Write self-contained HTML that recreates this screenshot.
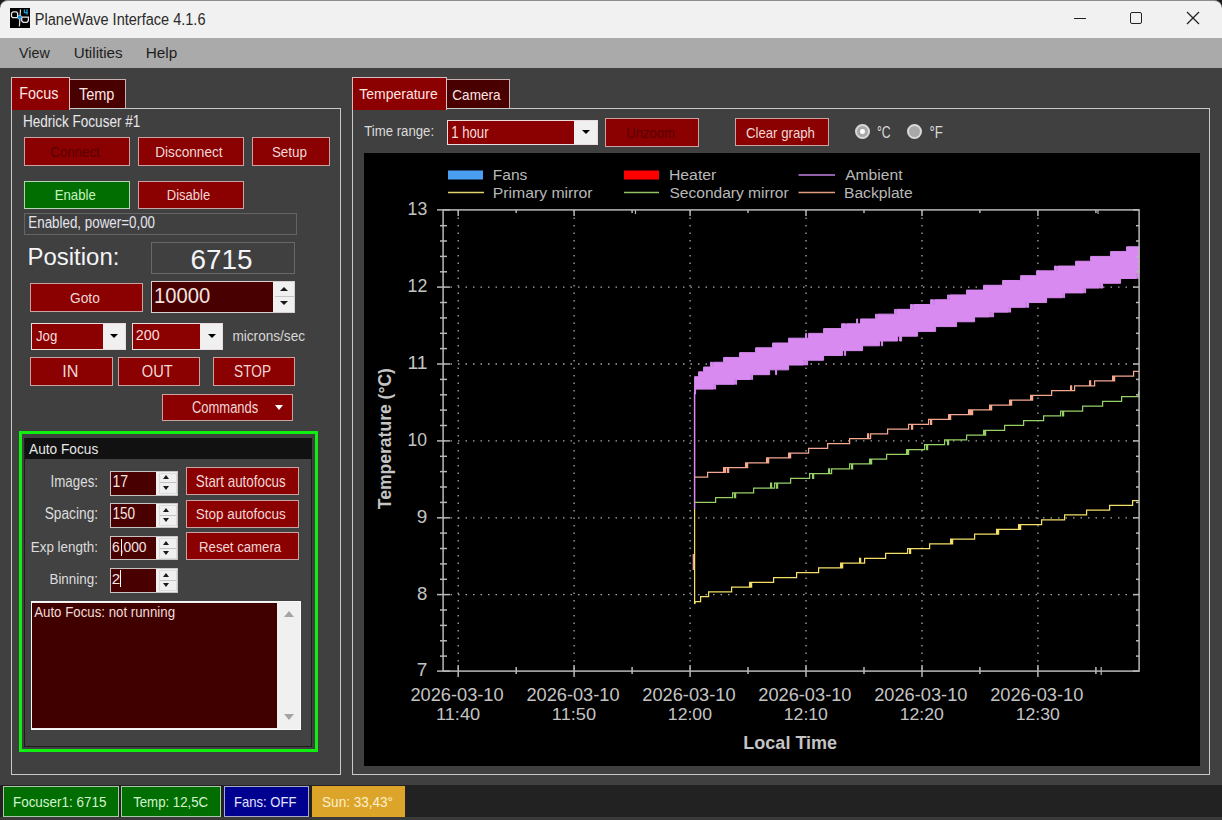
<!DOCTYPE html>
<html><head><meta charset="utf-8">
<style>
*{box-sizing:border-box;margin:0;padding:0}
html,body{width:1222px;height:820px;overflow:hidden;background:#404040;font-family:"Liberation Sans",sans-serif}
.a{position:absolute}
.btn{position:absolute;background:#8b0000;border:1px solid #c9a3a3}
.num{position:absolute;background:#480000;border:1.3px solid #c8c4c4}
.spin{position:absolute;top:0;right:0;bottom:0;background:#f0f0f0}
.combo{position:absolute;background:#8b0000;border:1.5px solid #e8dcdc}
.combo .dd{position:absolute;top:0;right:0;bottom:0;background:#f0f0f0}
.tri{position:absolute;width:0;height:0;border-left:4px solid transparent;border-right:4px solid transparent;border-top:4px solid #000}
.trid{position:absolute;width:0;height:0;border-left:3.6px solid transparent;border-right:3.6px solid transparent;border-top:4.2px solid #1a1a1a}
.triu{position:absolute;width:0;height:0;border-left:3.6px solid transparent;border-right:3.6px solid transparent;border-bottom:4.2px solid #1a1a1a}
</style></head><body>
<!-- title bar -->
<div class="a" style="left:0;top:0;width:1222px;height:20px;background:#1c1c1c"></div>
<div class="a" style="left:0;top:0;width:1222px;height:38px;background:#f2f1f1;border-radius:8px 8px 0 0;border-top:1px solid #8c8c8c"></div>
<svg class="a" style="left:10px;top:8px" width="20" height="20" viewBox="0 0 20 20">
<rect x="0" y="0" width="20" height="20" fill="#000"/>
<path d="M3,3.8 H6.3 L7.6,5.1 V9.7 H2.8 L1.5,8.4 V5.3 Z" fill="none" stroke="#e4e4e4" stroke-width="1.3"/>
<path d="M11.7,9.1 H18.4 V12.8 L16.9,14.3 H13.2 L11.7,12.8 Z" fill="none" stroke="#e4e4e4" stroke-width="1.3"/>
<path d="M10.5,1.5 L9.4,18.4" stroke="#e4e4e4" stroke-width="1.2"/>
<circle cx="9.6" cy="9.2" r="2.3" fill="#a0dcff"/>
<circle cx="9.6" cy="9.2" r="1.7" fill="#1c8ad0"/>
<path d="M14.4,1.6 V4.7 H17.9 M17,1.3 V6.8" fill="none" stroke="#20a0d8" stroke-width="1.3"/>
</svg>
<!-- window controls -->
<div class="a" style="left:1074px;top:18px;width:12px;height:1.3px;background:#222"></div>
<div class="a" style="left:1130px;top:11.5px;width:12px;height:12px;border:1.3px solid #222;border-radius:2px"></div>
<svg class="a" style="left:1186px;top:11px" width="14" height="14"><path d="M1,1 L13,13 M13,1 L1,13" stroke="#222" stroke-width="1.3"/></svg>
<!-- menu -->
<div class="a" style="left:0;top:38px;width:1222px;height:30px;background:#aaaaaa"></div>

<!-- LEFT PANEL -->
<div class="a" style="left:11px;top:107.8px;width:330px;height:667.5px;border:1.6px solid #c8c8c8"></div>
<div class="a" style="left:11px;top:77px;width:58.7px;height:32.5px;background:#8b0000;border:1.4px solid #d4c0c0;border-bottom:none"></div>
<div class="a" style="left:69.7px;top:79.3px;width:56px;height:28.7px;background:#480000;border:1.3px solid #c8b0b0;border-bottom:none;border-left:none"></div>

<div class="btn" style="left:24px;top:137px;width:106px;height:28.5px"></div>
<div class="btn" style="left:137.5px;top:137px;width:106.5px;height:28.5px"></div>
<div class="btn" style="left:251.5px;top:137px;width:78.5px;height:28.5px"></div>
<div class="btn" style="left:24px;top:181px;width:106px;height:28px;background:#006e00;border-color:#b4d4b4"></div>
<div class="btn" style="left:137.5px;top:181px;width:106.5px;height:28px"></div>
<div class="a" style="left:24px;top:213px;width:273px;height:22px;border:1px solid #646464"></div>

<div class="a" style="left:151px;top:242px;width:144px;height:32px;border:1px solid #686868"></div>

<div class="btn" style="left:30px;top:283px;width:112.5px;height:28.5px"></div>
<div class="num" style="left:151px;top:280.5px;width:144px;height:32.5px;border-color:#d8d0d0">
  <div class="spin" style="width:21px"></div>
</div>
<div class="a" style="left:279.5px;top:287.3px;width:0;height:0;border-left:4.4px solid transparent;border-right:4.4px solid transparent;border-bottom:4.8px solid #1a1a1a"></div>
<div class="a" style="left:279.5px;top:301.4px;width:0;height:0;border-left:4.4px solid transparent;border-right:4.4px solid transparent;border-top:4.8px solid #1a1a1a"></div>
<div class="a" style="left:275px;top:296px;width:19px;height:1px;background:#c8c8c8"></div>

<div class="combo" style="left:31px;top:323px;width:94.5px;height:26.5px"><div class="dd" style="width:22px"></div></div>
<div class="tri" style="left:110px;top:333.5px"></div>
<div class="combo" style="left:132.3px;top:323px;width:90.5px;height:26.5px"><div class="dd" style="width:22px"></div></div>
<div class="tri" style="left:207.5px;top:333.5px"></div>

<div class="btn" style="left:30px;top:357px;width:83px;height:28.5px"></div>
<div class="btn" style="left:117.7px;top:357px;width:82.5px;height:28.5px"></div>
<div class="btn" style="left:212.9px;top:357px;width:82.3px;height:28.5px"></div>
<div class="btn" style="left:161.6px;top:393.6px;width:131.2px;height:27.5px"></div>
<div class="a" style="left:275.3px;top:405.2px;width:0;height:0;border-left:4.7px solid transparent;border-right:4.7px solid transparent;border-top:5.6px solid #fff"></div>

<!-- Auto focus group -->
<div class="a" style="left:18.5px;top:430.5px;width:299.5px;height:321px;border:3px solid #10f010"></div>
<div class="a" style="left:24px;top:437.5px;width:288px;height:309px;border:1.5px solid #1c1c1c;background:#424242"></div>
<div class="a" style="left:24.5px;top:438px;width:287px;height:21px;background:#111111"></div>

<div class="num" style="left:110.2px;top:470.5px;width:68px;height:25px"><div class="spin" style="width:21px"></div></div>
<div class="btn" style="left:186.4px;top:467.4px;width:112.3px;height:27.7px"></div>
<div class="num" style="left:110.2px;top:503.2px;width:68px;height:24.5px"><div class="spin" style="width:21px"></div></div>
<div class="btn" style="left:186.4px;top:500px;width:112.3px;height:27.7px"></div>
<div class="num" style="left:110.2px;top:535.9px;width:68px;height:24.5px"><div class="spin" style="width:21px"></div></div>
<div class="btn" style="left:186.4px;top:532.4px;width:112.3px;height:27.7px"></div>
<div class="num" style="left:110.2px;top:568.2px;width:68px;height:24.5px"><div class="spin" style="width:21px"></div></div>
<div class="triu" style="left:163.3px;top:475.1px"></div><div class="trid" style="left:163.3px;top:485.5px"></div><div class="a" style="left:159px;top:482.1px;width:17px;height:1px;background:#c4c4c4"></div><div class="a" style="left:158.5px;top:472.5px;width:18px;height:21.0px;border:1px solid #dcdcdc"></div>
<div class="triu" style="left:163.3px;top:507.8px"></div><div class="trid" style="left:163.3px;top:518.2px"></div><div class="a" style="left:159px;top:514.8px;width:17px;height:1px;background:#c4c4c4"></div><div class="a" style="left:158.5px;top:505.2px;width:18px;height:21.0px;border:1px solid #dcdcdc"></div>
<div class="triu" style="left:163.3px;top:540.5px"></div><div class="trid" style="left:163.3px;top:550.9px"></div><div class="a" style="left:159px;top:547.5px;width:17px;height:1px;background:#c4c4c4"></div><div class="a" style="left:158.5px;top:537.9px;width:18px;height:21.0px;border:1px solid #dcdcdc"></div>
<div class="triu" style="left:163.3px;top:572.8px"></div><div class="trid" style="left:163.3px;top:583.2px"></div><div class="a" style="left:159px;top:579.8px;width:17px;height:1px;background:#c4c4c4"></div><div class="a" style="left:158.5px;top:570.2px;width:18px;height:21.0px;border:1px solid #dcdcdc"></div>
<div class="a" style="left:120.3px;top:570px;width:1.2px;height:17px;background:#fff"></div>
<div class="a" style="left:120.6px;top:538.5px;width:1.1px;height:17px;background:#fff"></div>

<div class="a" style="left:30.5px;top:601px;width:270.5px;height:128.5px;background:#f0f0f0;border:1.5px solid #f8f8f8"></div>
<div class="a" style="left:32px;top:602.5px;width:245px;height:125.2px;background:#400000"></div>
<div class="a" style="left:283.6px;top:610.8px;width:0;height:0;border-left:5.2px solid transparent;border-right:5.2px solid transparent;border-bottom:6.4px solid #a4a4a4"></div>
<div class="a" style="left:283.6px;top:714.3px;width:0;height:0;border-left:5.2px solid transparent;border-right:5.2px solid transparent;border-top:6.4px solid #a4a4a4"></div>

<!-- RIGHT PANEL -->
<div class="a" style="left:352px;top:107.8px;width:858px;height:667px;border:1.6px solid #c8c8c8"></div>
<div class="a" style="left:352px;top:77px;width:94.8px;height:32.5px;background:#8b0000;border:1.4px solid #d4c0c0;border-bottom:none"></div>
<div class="a" style="left:446.8px;top:79.3px;width:63.5px;height:28.7px;background:#480000;border:1.3px solid #c8b0b0;border-bottom:none;border-left:none"></div>

<div class="combo" style="left:446.5px;top:119.5px;width:151px;height:25.5px"><div class="dd" style="width:22.5px"></div></div>
<div class="tri" style="left:582px;top:130px"></div>
<div class="btn" style="left:605.3px;top:118.2px;width:93.4px;height:28.5px"></div>
<div class="btn" style="left:735.4px;top:118.2px;width:93.2px;height:28px"></div>
<div class="a" style="left:854.8px;top:124px;width:15.2px;height:15.2px;border-radius:50%;background:#a8a8a8;border:2px solid #d8d8d8"></div>
<div class="a" style="left:860.1px;top:129.3px;width:4.6px;height:4.6px;border-radius:50%;background:#fff"></div>
<div class="a" style="left:907.3px;top:124px;width:15.2px;height:15.2px;border-radius:50%;background:#a8a8a8;border:2px solid #d8d8d8"></div>

<div class="a" style="left:364px;top:153px;width:836px;height:613px;background:#000"></div>
<svg width="1222" height="820" style="position:absolute;left:0;top:0">
<g stroke="#a8a8a8" stroke-width="1.3" stroke-dasharray="1.5 6" fill="none"><line x1="443" y1="594.6" x2="1139" y2="594.6"/><line x1="443" y1="517.8" x2="1139" y2="517.8"/><line x1="443" y1="440.9" x2="1139" y2="440.9"/><line x1="443" y1="364.0" x2="1139" y2="364.0"/><line x1="443" y1="287.1" x2="1139" y2="287.1"/><line x1="458.2" y1="210" x2="458.2" y2="671"/><line x1="574.1" y1="210" x2="574.1" y2="671"/><line x1="690.1" y1="210" x2="690.1" y2="671"/><line x1="806.0" y1="210" x2="806.0" y2="671"/><line x1="922.0" y1="210" x2="922.0" y2="671"/><line x1="1037.9" y1="210" x2="1037.9" y2="671"/></g>
<path d="M694.6,393.92V376.68H698.6V371.87H703.6V367.06H710.6V362.25H712.6V367.06H713.6V362.25H723.6V357.44H739.6V352.63H755.6V347.82H772.6V343.01H788.6V338.20H805.6V333.39H806.6V338.20H808.6V333.39H823.6V328.58H841.6V323.77H845.6V328.58H846.6V323.77H856.6V318.96H857.6V323.77H860.6V318.96H875.6V314.15H876.6V318.96H877.6V314.15H894.6V309.34H895.6V314.15H896.6V309.34H910.6V304.53H912.6V309.34H913.6V304.53H930.6V299.72H933.6V304.53H934.6V299.72H947.6V294.91H948.6V299.72H949.6V294.91H966.6V290.10H983.6V285.29H1002.6V280.48H1020.6V275.67H1036.6V270.86H1054.6V266.05H1056.6V270.86H1057.6V266.05H1075.6V261.24H1090.6V256.43H1110.6V251.62H1126.6V246.81H1139V273.67H1138.6V278.48H1137.6V273.67H1136.6V278.48H1120.6V283.29H1102.6V288.10H1100.6V283.29H1099.6V288.10H1085.6V292.91H1084.6V288.10H1083.6V292.91H1064.6V297.72H1063.6V292.91H1062.6V297.72H1046.6V302.53H1028.6V307.34H1026.6V302.53H1025.6V307.34H1010.6V312.15H1009.6V307.34H1008.6V312.15H993.6V316.96H992.6V312.15H991.6V316.96H990.6V312.15H989.6V316.96H974.6V321.77H956.6V326.58H935.6V331.39H917.6V336.20H901.6V341.01H899.6V336.20H897.6V341.01H882.6V345.82H881.6V341.01H879.6V345.82H862.6V350.63H845.6V355.44H844.6V350.63H842.6V355.44H823.6V360.25H807.6V365.06H806.6V360.25H805.6V365.06H804.6V360.25H803.6V365.06H788.6V369.87H776.6V374.68H775.6V369.87H769.6V374.68H752.6V379.49H751.6V374.68H750.6V379.49H736.6V384.30H735.6V379.49H734.6V384.30H715.6V389.11H714.6V384.30H713.6V389.11H695.6V393.92H694.6Z" fill="#d98af0" stroke="#d98af0" stroke-width="1"/>
<line x1="694.6" y1="392" x2="694.6" y2="509" stroke="#d98af0" stroke-width="1.5"/>
<line x1="693.4" y1="554" x2="693.4" y2="570" stroke="#f0a0a0" stroke-width="1.5"/>
<path d="M694.6,477.19H707.6V472.38H723.6V467.57H724.6V472.38H725.6V467.57H727.6V472.38H728.6V467.57H745.6V462.76H746.6V467.57H747.6V462.76H766.6V457.95H767.6V462.76H768.6V457.95H788.6V453.14H789.6V457.95H790.6V453.14H808.6V448.33H827.6V443.52H849.6V438.71H867.6V433.90H868.6V438.71H870.6V433.90H887.6V429.09H908.6V424.28H911.6V429.09H912.6V424.28H928.6V419.47H930.6V424.28H931.6V419.47H948.6V414.66H949.6V419.47H950.6V414.66H968.6V409.85H969.6V414.66H970.6V409.85H971.6V414.66H972.6V409.85H989.6V405.04H990.6V409.85H991.6V405.04H1009.6V400.23H1010.6V405.04H1011.6V400.23H1030.6V395.42H1031.6V400.23H1032.6V395.42H1051.6V390.61H1070.6V385.80H1071.6V390.61H1074.6V385.80H1089.6V380.99H1090.6V385.80H1094.6V380.99H1112.6V376.18H1113.6V380.99H1114.6V376.18H1133.6V371.37H1139.0" fill="none" stroke="#f4a890" stroke-width="1.25"/>
<path d="M694.6,502.44H715.6V497.63H732.6V492.82H734.6V497.63H735.6V492.82H753.6V488.01H770.6V483.20H771.6V488.01H774.6V483.20H776.6V488.01H777.6V483.20H790.6V478.39H809.6V473.58H812.6V478.39H813.6V473.58H828.6V468.77H829.6V473.58H831.6V468.77H849.6V463.96H851.6V468.77H852.6V463.96H869.6V459.15H870.6V463.96H871.6V459.15H886.6V454.34H906.6V449.53H907.6V454.34H908.6V449.53H924.6V444.72H926.6V449.53H927.6V444.72H944.6V439.91H947.6V444.72H948.6V439.91H966.6V435.10H983.6V430.29H984.6V435.10H985.6V430.29H1004.6V425.48H1023.6V420.67H1043.6V415.86H1060.6V411.05H1062.6V415.86H1063.6V411.05H1082.6V406.24H1102.6V401.43H1121.6V396.62H1138.6V391.81H1139.0" fill="none" stroke="#98d068" stroke-width="1.25"/>
<path d="M694.6,509V604L695.6,601.55H700.6V596.74H708.6V591.93H731.6V587.12H749.6V582.31H750.6V587.12H751.6V582.31H773.6V577.50H796.6V572.69H818.6V567.88H840.6V563.07H841.6V567.88H842.6V563.07H859.6V558.26H860.6V563.07H864.6V558.26H885.6V553.45H907.6V548.64H909.6V553.45H910.6V548.64H929.6V543.83H950.6V539.02H951.6V543.83H952.6V539.02H974.6V534.21H996.6V529.40H997.6V534.21H998.6V529.40H1018.6V524.59H1019.6V529.40H1020.6V524.59H1041.6V519.78H1064.6V514.97H1086.6V510.16H1109.6V505.35H1132.6V500.54H1139.0" fill="none" stroke="#f4e068" stroke-width="1.25"/>
<rect x="443.1" y="209.9" width="696" height="461.2" fill="none" stroke="#b8b8b8" stroke-width="1.5"/>
<g stroke="#b8b8b8" stroke-width="1.5"><line x1="437" y1="671.1" x2="450" y2="671.1"/><line x1="1133" y1="671.1" x2="1139" y2="671.1"/><line x1="440" y1="656.1" x2="447" y2="656.1"/><line x1="1136" y1="656.1" x2="1139" y2="656.1"/><line x1="440" y1="640.8" x2="447" y2="640.8"/><line x1="1136" y1="640.8" x2="1139" y2="640.8"/><line x1="440" y1="625.4" x2="447" y2="625.4"/><line x1="1136" y1="625.4" x2="1139" y2="625.4"/><line x1="440" y1="610.0" x2="447" y2="610.0"/><line x1="1136" y1="610.0" x2="1139" y2="610.0"/><line x1="437" y1="594.6" x2="450" y2="594.6"/><line x1="1133" y1="594.6" x2="1139" y2="594.6"/><line x1="440" y1="579.3" x2="447" y2="579.3"/><line x1="1136" y1="579.3" x2="1139" y2="579.3"/><line x1="440" y1="563.9" x2="447" y2="563.9"/><line x1="1136" y1="563.9" x2="1139" y2="563.9"/><line x1="440" y1="548.5" x2="447" y2="548.5"/><line x1="1136" y1="548.5" x2="1139" y2="548.5"/><line x1="440" y1="533.1" x2="447" y2="533.1"/><line x1="1136" y1="533.1" x2="1139" y2="533.1"/><line x1="437" y1="517.8" x2="450" y2="517.8"/><line x1="1133" y1="517.8" x2="1139" y2="517.8"/><line x1="440" y1="502.4" x2="447" y2="502.4"/><line x1="1136" y1="502.4" x2="1139" y2="502.4"/><line x1="440" y1="487.0" x2="447" y2="487.0"/><line x1="1136" y1="487.0" x2="1139" y2="487.0"/><line x1="440" y1="471.6" x2="447" y2="471.6"/><line x1="1136" y1="471.6" x2="1139" y2="471.6"/><line x1="440" y1="456.3" x2="447" y2="456.3"/><line x1="1136" y1="456.3" x2="1139" y2="456.3"/><line x1="437" y1="440.9" x2="450" y2="440.9"/><line x1="1133" y1="440.9" x2="1139" y2="440.9"/><line x1="440" y1="425.5" x2="447" y2="425.5"/><line x1="1136" y1="425.5" x2="1139" y2="425.5"/><line x1="440" y1="410.1" x2="447" y2="410.1"/><line x1="1136" y1="410.1" x2="1139" y2="410.1"/><line x1="440" y1="394.8" x2="447" y2="394.8"/><line x1="1136" y1="394.8" x2="1139" y2="394.8"/><line x1="440" y1="379.4" x2="447" y2="379.4"/><line x1="1136" y1="379.4" x2="1139" y2="379.4"/><line x1="437" y1="364.0" x2="450" y2="364.0"/><line x1="1133" y1="364.0" x2="1139" y2="364.0"/><line x1="440" y1="348.6" x2="447" y2="348.6"/><line x1="1136" y1="348.6" x2="1139" y2="348.6"/><line x1="440" y1="333.3" x2="447" y2="333.3"/><line x1="1136" y1="333.3" x2="1139" y2="333.3"/><line x1="440" y1="317.9" x2="447" y2="317.9"/><line x1="1136" y1="317.9" x2="1139" y2="317.9"/><line x1="440" y1="302.5" x2="447" y2="302.5"/><line x1="1136" y1="302.5" x2="1139" y2="302.5"/><line x1="437" y1="287.1" x2="450" y2="287.1"/><line x1="1133" y1="287.1" x2="1139" y2="287.1"/><line x1="440" y1="271.8" x2="447" y2="271.8"/><line x1="1136" y1="271.8" x2="1139" y2="271.8"/><line x1="440" y1="256.4" x2="447" y2="256.4"/><line x1="1136" y1="256.4" x2="1139" y2="256.4"/><line x1="440" y1="241.0" x2="447" y2="241.0"/><line x1="1136" y1="241.0" x2="1139" y2="241.0"/><line x1="440" y1="225.7" x2="447" y2="225.7"/><line x1="1136" y1="225.7" x2="1139" y2="225.7"/><line x1="437" y1="209.9" x2="450" y2="209.9"/><line x1="1133" y1="209.9" x2="1139" y2="209.9"/><line x1="458.2" y1="665" x2="458.2" y2="677"/><line x1="458.2" y1="210" x2="458.2" y2="216"/><line x1="516.2" y1="667" x2="516.2" y2="674"/><line x1="516.2" y1="210" x2="516.2" y2="213"/><line x1="574.1" y1="665" x2="574.1" y2="677"/><line x1="574.1" y1="210" x2="574.1" y2="216"/><line x1="632.1" y1="667" x2="632.1" y2="674"/><line x1="632.1" y1="210" x2="632.1" y2="213"/><line x1="690.1" y1="665" x2="690.1" y2="677"/><line x1="690.1" y1="210" x2="690.1" y2="216"/><line x1="748.0" y1="667" x2="748.0" y2="674"/><line x1="748.0" y1="210" x2="748.0" y2="213"/><line x1="806.0" y1="665" x2="806.0" y2="677"/><line x1="806.0" y1="210" x2="806.0" y2="216"/><line x1="864.0" y1="667" x2="864.0" y2="674"/><line x1="864.0" y1="210" x2="864.0" y2="213"/><line x1="922.0" y1="665" x2="922.0" y2="677"/><line x1="922.0" y1="210" x2="922.0" y2="216"/><line x1="979.9" y1="667" x2="979.9" y2="674"/><line x1="979.9" y1="210" x2="979.9" y2="213"/><line x1="1037.9" y1="665" x2="1037.9" y2="677"/><line x1="1037.9" y1="210" x2="1037.9" y2="216"/><line x1="1095.9" y1="667" x2="1095.9" y2="674"/><line x1="1095.9" y1="210" x2="1095.9" y2="213"/><line x1="1101.2" y1="667" x2="1101.2" y2="675" stroke-width="1.2"/><line x1="1098" y1="210" x2="1098" y2="214" stroke-width="1.2"/><line x1="635.5" y1="210" x2="635.5" y2="214" stroke-width="1.2"/></g>
<rect x="448" y="170.5" width="35" height="9" fill="#4a9ff0"/>
<line x1="448" y1="192.5" x2="484" y2="192.5" stroke="#e0d070" stroke-width="1.3"/>
<rect x="624" y="170.5" width="35" height="9" fill="#ff0000"/>
<line x1="624" y1="192.5" x2="659" y2="192.5" stroke="#90c060" stroke-width="1.3"/>
<line x1="798.5" y1="175" x2="835" y2="175" stroke="#c080e0" stroke-width="1.3"/>
<line x1="798.5" y1="192.5" x2="835" y2="192.5" stroke="#e0a080" stroke-width="1.3"/>
</svg>

<!-- STATUS BAR -->
<div class="a" style="left:0;top:785px;width:1222px;height:35px;background:#222222"></div>
<div class="a" style="left:0;top:817px;width:1222px;height:3px;background:#3a3a3a"></div>
<div class="a" style="left:3px;top:785.5px;width:115.5px;height:31px;background:#006e00;border:1px solid #a8c8a8"></div>
<div class="a" style="left:121.4px;top:785.5px;width:99.6px;height:31px;background:#006e00;border:1px solid #a8c8a8"></div>
<div class="a" style="left:224px;top:785.5px;width:84.5px;height:31px;background:#000090;border:1px solid #a8a8c8"></div>
<div class="a" style="left:311.8px;top:785.5px;width:93.2px;height:31px;background:#dca52a"></div>
<svg width="1222" height="820" style="position:absolute;left:0;top:0" font-family="Liberation Sans"><text transform="translate(34.84,24.50) scale(0.8722,1)" font-size="16.67" fill="#2a2a2a">PlaneWave Interface 4.1.6</text>
<text transform="translate(19.10,58.00) scale(0.9285,1)" font-size="15.36" fill="#1e1e1e">View</text>
<text transform="translate(73.66,58.00) scale(0.9913,1)" font-size="15.36" fill="#1e1e1e">Utilities</text>
<text transform="translate(145.77,58.00) scale(0.9989,1)" font-size="15.36" fill="#1e1e1e">Help</text>
<text transform="translate(19.15,98.90) scale(0.9043,1)" font-size="15.94" fill="#ffe4e4">Focus</text>
<text transform="translate(78.91,100.40) scale(0.9021,1)" font-size="16.09" fill="#ffe4e4">Temp</text>
<text transform="translate(22.92,127.00) scale(0.8418,1)" font-size="16.09" fill="#e8e8ec">Hedrick Focuser #1</text>
<text transform="translate(50.13,156.60) scale(0.8770,1)" font-size="15.22" fill="#580000">Connect</text>
<text transform="translate(155.21,156.80) scale(0.8790,1)" font-size="15.51" fill="#f0d8d8">Disconnect</text>
<text transform="translate(271.89,156.80) scale(0.8676,1)" font-size="15.51" fill="#f0d8d8">Setup</text>
<text transform="translate(54.74,200.20) scale(0.8674,1)" font-size="15.22" fill="#c8f4c0">Enable</text>
<text transform="translate(166.76,200.20) scale(0.8567,1)" font-size="15.22" fill="#f0d8d8">Disable</text>
<text transform="translate(28.33,227.90) scale(0.8543,1)" font-size="15.65" fill="#e4e4ee">Enabled, power=0,00</text>
<text transform="translate(27.58,265.40) scale(0.9774,1)" font-size="24.49" fill="#f4f4f8">Position:</text>
<text transform="translate(190.41,269.30) scale(1.0075,1)" font-size="27.68" fill="#f4f4f8">6715</text>
<text transform="translate(70.01,302.50) scale(0.9598,1)" font-size="14.35" fill="#f0d8d8">Goto</text>
<text transform="translate(153.98,303.10) scale(0.9243,1)" font-size="21.88" fill="#f4e4e0">10000</text>
<text transform="translate(36.00,341.30) scale(0.9304,1)" font-size="14.20" fill="#f6dede">Jog</text>
<text transform="translate(135.79,340.20) scale(0.9386,1)" font-size="15.22" fill="#f6dede">200</text>
<text transform="translate(232.41,340.60) scale(0.9133,1)" font-size="14.93" fill="#d8d8d8">microns/sec</text>
<text transform="translate(62.24,376.80) scale(1.0356,1)" font-size="15.65" fill="#f0d8d8">IN</text>
<text transform="translate(141.84,376.80) scale(0.9341,1)" font-size="15.65" fill="#f0d8d8">OUT</text>
<text transform="translate(234.09,376.80) scale(0.8722,1)" font-size="15.65" fill="#f0d8d8">STOP</text>
<text transform="translate(191.95,412.80) scale(0.8298,1)" font-size="15.65" fill="#f0d8d8">Commands</text>
<text transform="translate(29.10,454.10) scale(0.9437,1)" font-size="14.49" fill="#e8e8e8">Auto Focus</text>
<text transform="translate(50.50,486.80) scale(0.8390,1)" font-size="15.94" fill="#dcdcdc">Images:</text>
<text transform="translate(112.44,486.60) scale(0.9024,1)" font-size="15.65" fill="#f4e4e0">17</text>
<text transform="translate(195.80,486.80) scale(0.8391,1)" font-size="15.94" fill="#f0d8d8">Start autofocus</text>
<text transform="translate(44.68,519.00) scale(0.8690,1)" font-size="15.80" fill="#dcdcdc">Spacing:</text>
<text transform="translate(112.48,519.00) scale(0.8577,1)" font-size="15.80" fill="#f4e4e0">150</text>
<text transform="translate(195.79,519.00) scale(0.8697,1)" font-size="15.51" fill="#f0d8d8">Stop autofocus</text>
<text transform="translate(30.72,551.60) scale(0.8833,1)" font-size="15.22" fill="#dcdcdc">Exp length:</text>
<text transform="translate(112.01,551.60) scale(0.9084,1)" font-size="15.22" fill="#f4e4e0">6,000</text>
<text transform="translate(199.04,551.90) scale(0.8516,1)" font-size="15.51" fill="#f0d8d8">Reset camera</text>
<text transform="translate(49.43,583.70) scale(0.8829,1)" font-size="15.22" fill="#dcdcdc">Binning:</text>
<text transform="translate(111.74,583.70) scale(1.0000,1)" font-size="15.22" fill="#f4e4e0">2</text>
<text transform="translate(34.20,617.10) scale(0.9250,1)" font-size="14.35" fill="#f0dcd8">Auto Focus: not running</text>
<text transform="translate(359.32,98.70) scale(0.9012,1)" font-size="15.51" fill="#ffe4e4">Temperature</text>
<text transform="translate(452.32,99.80) scale(0.8910,1)" font-size="15.22" fill="#ffe4e4">Camera</text>
<text transform="translate(364.24,136.40) scale(0.8510,1)" font-size="15.51" fill="#dcdcdc">Time range:</text>
<text transform="translate(451.21,137.90) scale(0.8265,1)" font-size="15.94" fill="#f6dede">1 hour</text>
<text transform="translate(626.22,137.50) scale(0.9097,1)" font-size="14.35" fill="#580000">Unzoom</text>
<text transform="translate(745.94,137.50) scale(0.9213,1)" font-size="14.35" fill="#f0d8d8">Clear graph</text>
<text transform="translate(876.93,138.40) scale(0.7537,1)" font-size="16.23" fill="#dcdcdc">°C</text>
<text transform="translate(929.47,138.40) scale(0.8171,1)" font-size="16.23" fill="#dcdcdc">°F</text>
<text transform="translate(492.76,180.30) scale(1.0423,1)" font-size="14.93" fill="#b8b8b8">Fans</text>
<text transform="translate(492.74,197.60) scale(1.0565,1)" font-size="14.93" fill="#b8b8b8">Primary mirror</text>
<text transform="translate(668.94,180.30) scale(1.0572,1)" font-size="14.93" fill="#b8b8b8">Heater</text>
<text transform="translate(669.50,197.60) scale(1.0413,1)" font-size="14.93" fill="#b8b8b8">Secondary mirror</text>
<text transform="translate(845.20,180.30) scale(1.0472,1)" font-size="14.93" fill="#b8b8b8">Ambient</text>
<text transform="translate(843.95,197.60) scale(1.0479,1)" font-size="14.93" fill="#b8b8b8">Backplate</text>
<text transform="translate(743.33,749.10) scale(1.0112,1)" font-size="17.83" fill="#c4c4c4" font-weight="bold">Local Time</text>
<text transform="translate(12.92,806.50) scale(0.8855,1)" font-size="15.22" fill="#d4f4d0">Focuser1: 6715</text>
<text transform="translate(133.14,806.50) scale(0.8700,1)" font-size="15.22" fill="#d4f4d0">Temp: 12,5C</text>
<text transform="translate(234.06,806.50) scale(0.8583,1)" font-size="15.22" fill="#e4e4ff">Fans: OFF</text>
<text transform="translate(322.09,806.50) scale(0.8899,1)" font-size="15.22" fill="#fff0d0">Sun: 33,43°</text>
<text transform="translate(416.74,676.10) scale(1.0560,1)" font-size="18.12" fill="#c4c4c4">7</text>
<text transform="translate(416.96,599.63) scale(1.0227,1)" font-size="18.12" fill="#c4c4c4">8</text>
<text transform="translate(416.85,522.76) scale(1.0446,1)" font-size="18.12" fill="#c4c4c4">9</text>
<text transform="translate(407.58,445.89) scale(0.9704,1)" font-size="18.12" fill="#c4c4c4">10</text>
<text transform="translate(407.46,369.02) scale(1.0595,1)" font-size="18.12" fill="#c4c4c4">11</text>
<text transform="translate(407.57,292.15) scale(0.9802,1)" font-size="18.12" fill="#c4c4c4">12</text>
<text transform="translate(407.57,214.88) scale(0.9753,1)" font-size="18.12" fill="#c4c4c4">13</text>
<text transform="translate(410.44,700.50) scale(1.0398,1)" font-size="17.54" fill="#c4c4c4">2026-03-10</text>
<text transform="translate(435.93,720.20) scale(1.0650,1)" font-size="17.10" fill="#c4c4c4">11:40</text>
<text transform="translate(526.38,700.50) scale(1.0398,1)" font-size="17.54" fill="#c4c4c4">2026-03-10</text>
<text transform="translate(551.87,720.20) scale(1.0650,1)" font-size="17.10" fill="#c4c4c4">11:50</text>
<text transform="translate(642.32,700.50) scale(1.0398,1)" font-size="17.54" fill="#c4c4c4">2026-03-10</text>
<text transform="translate(667.86,720.20) scale(1.0319,1)" font-size="17.10" fill="#c4c4c4">12:00</text>
<text transform="translate(758.26,700.50) scale(1.0398,1)" font-size="17.54" fill="#c4c4c4">2026-03-10</text>
<text transform="translate(783.80,720.20) scale(1.0319,1)" font-size="17.10" fill="#c4c4c4">12:10</text>
<text transform="translate(874.20,700.50) scale(1.0398,1)" font-size="17.54" fill="#c4c4c4">2026-03-10</text>
<text transform="translate(899.74,720.20) scale(1.0319,1)" font-size="17.10" fill="#c4c4c4">12:20</text>
<text transform="translate(990.14,700.50) scale(1.0398,1)" font-size="17.54" fill="#c4c4c4">2026-03-10</text>
<text transform="translate(1015.68,720.20) scale(1.0319,1)" font-size="17.10" fill="#c4c4c4">12:30</text>
<text transform="translate(391.4,509.18) rotate(-90) scale(0.9607,1)" font-size="18.26" fill="#c4c4c4" font-weight="bold">Temperature (°C)</text></svg>
</body></html>
